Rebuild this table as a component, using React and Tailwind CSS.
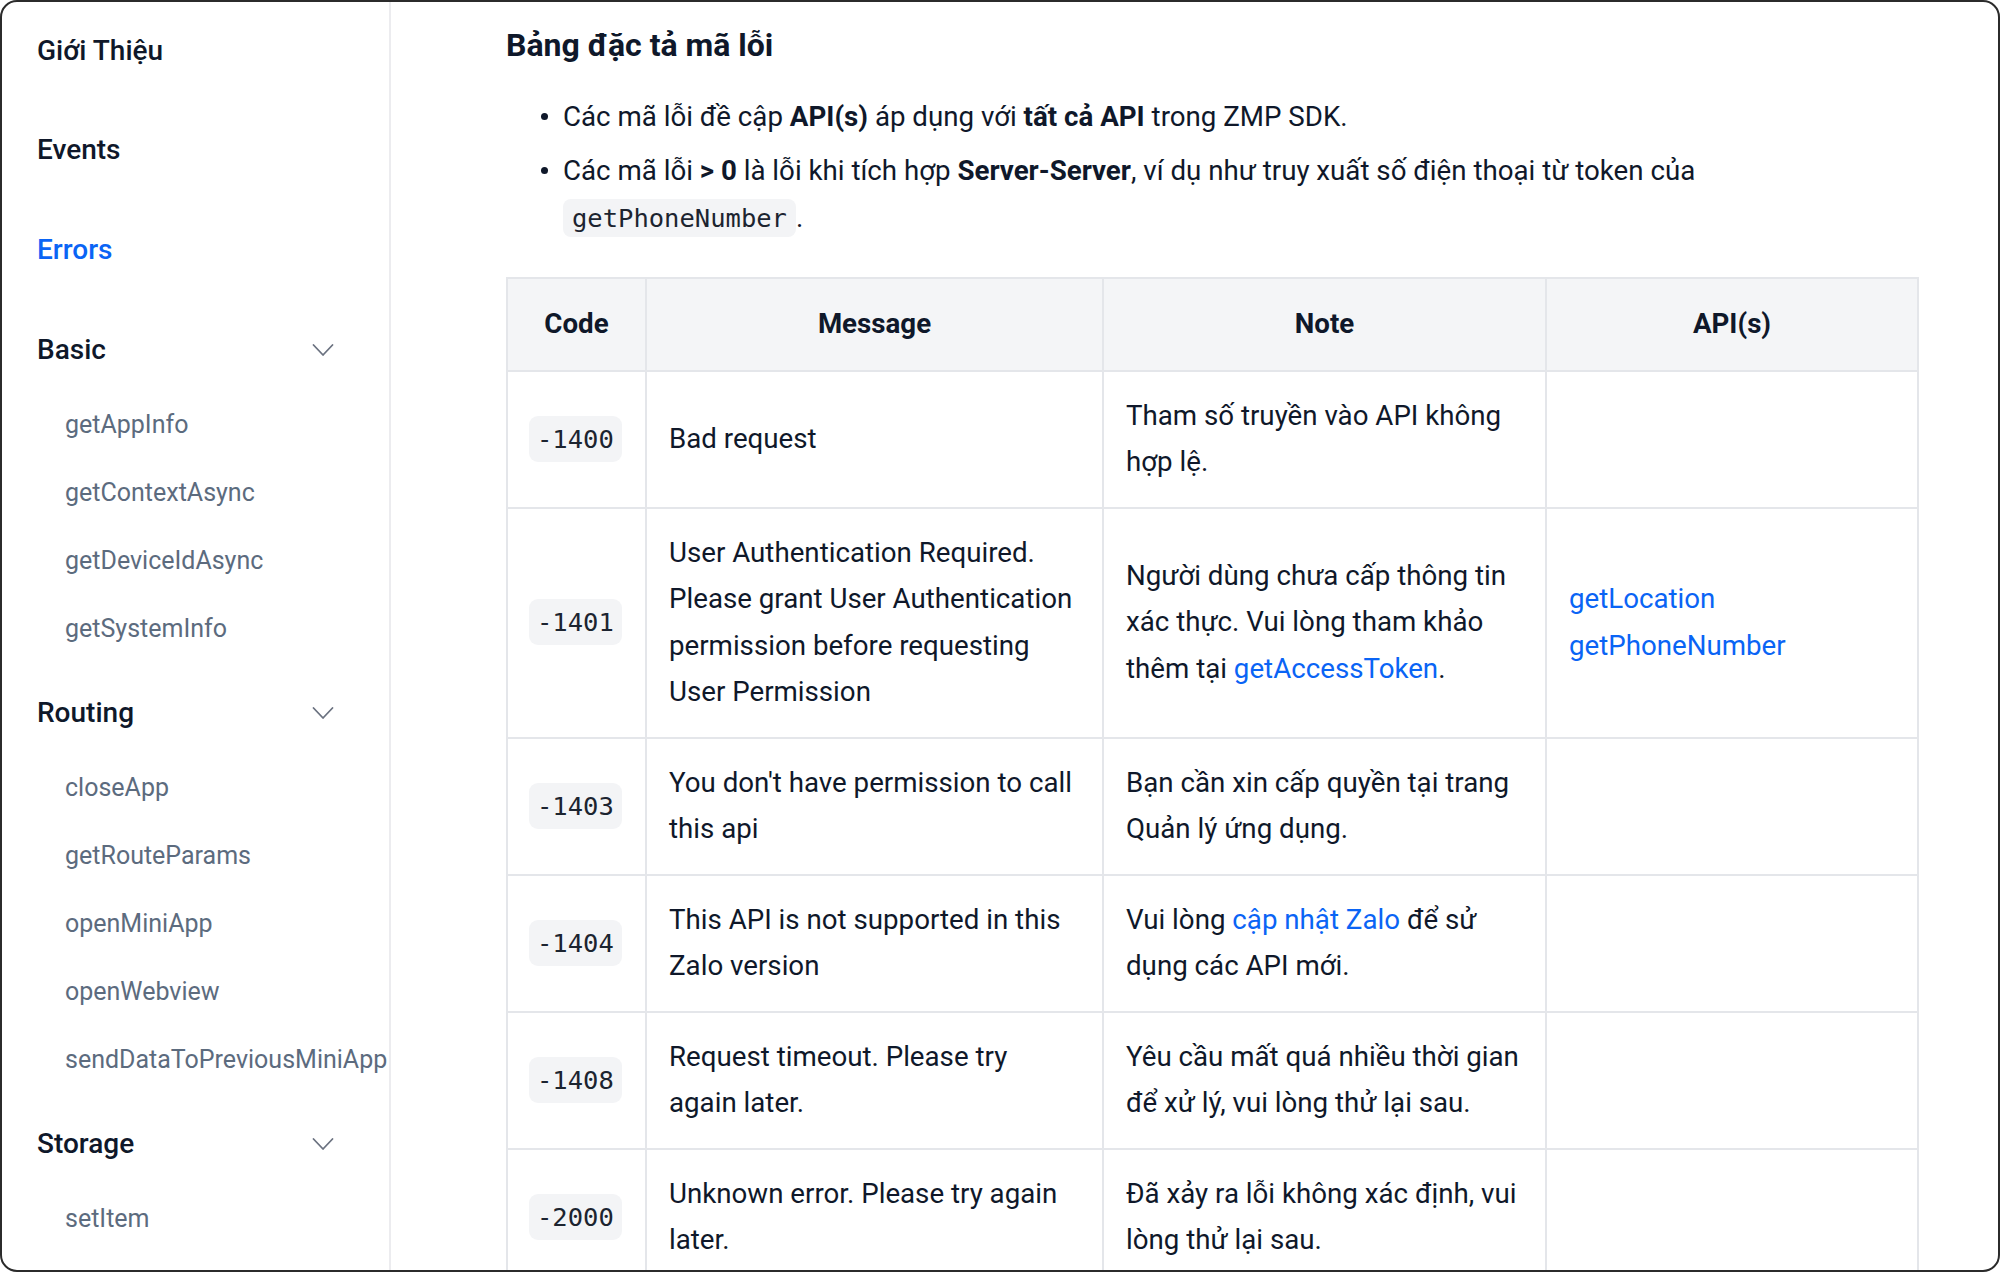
import React from 'react'

const Chevron = () => (
  <svg width="22" height="14" viewBox="0 0 22 14" fill="none" stroke="#6b7280" strokeWidth="1.8" strokeLinecap="round" strokeLinejoin="round">
    <polyline points="1.5,2 11,12 20.5,2" />
  </svg>
)

const topItems = [
  { label: 'Giới Thiệu', first: true },
  { label: 'Events' },
  { label: 'Errors', active: true },
]

const groups = [
  { title: 'Basic', items: ['getAppInfo', 'getContextAsync', 'getDeviceIdAsync', 'getSystemInfo'] },
  { title: 'Routing', items: ['closeApp', 'getRouteParams', 'openMiniApp', 'openWebview', 'sendDataToPreviousMiniApp'] },
  { title: 'Storage', items: ['setItem'] },
]

const Link = ({ children }) => <span className="text-[#0a64f5]">{children}</span>

const Code = ({ children }) => (
  <span className="inline-block rounded-[9px] bg-[#f3f4f6] px-[8px] leading-[46px] font-['DejaVu_Sans_Mono',monospace] text-[25.5px] text-[#1c2430]">
    {children}
  </span>
)

const rows = [
  {
    code: '-1400',
    message: <>Bad request</>,
    note: <>Tham số truyền vào API không<br />hợp lệ.</>,
  },
  {
    code: '-1401',
    message: <>User Authentication Required.<br />Please grant User Authentication<br />permission before requesting<br />User Permission</>,
    note: <>Người dùng chưa cấp thông tin<br />xác thực. Vui lòng tham khảo<br />thêm tại <Link>getAccessToken</Link>.</>,
    apis: ['getLocation', 'getPhoneNumber'],
  },
  {
    code: '-1403',
    message: <>You don't have permission to call<br />this api</>,
    note: <>Bạn cần xin cấp quyền tại trang<br />Quản lý ứng dụng.</>,
  },
  {
    code: '-1404',
    message: <>This API is not supported in this<br />Zalo version</>,
    note: <>Vui lòng <Link>cập nhật Zalo</Link> để sử<br />dụng các API mới.</>,
  },
  {
    code: '-1408',
    message: <>Request timeout. Please try<br />again later.</>,
    note: <>Yêu cầu mất quá nhiều thời gian<br />để xử lý, vui lòng thử lại sau.</>,
  },
  {
    code: '-2000',
    message: <>Unknown error. Please try again<br />later.</>,
    note: <>Đã xảy ra lỗi không xác định, vui<br />lòng thử lại sau.</>,
  },
]

const cell = 'border-2 border-[#e4e6ea] px-[22px] py-[21px] align-middle'

export default function App() {
  return (
    <div className="w-[2000px] h-[1272px] bg-white p-0 font-['Roboto',sans-serif] text-[#0f182a]">
      <div className="flex h-full w-full overflow-hidden rounded-[17px] border-2 border-[#2b2b2b] bg-white">
        {/* sidebar */}
        <aside className="w-[389px] shrink-0 border-r-2 border-[#ececef] pl-[35px]">
          {topItems.map((it) => (
            <div
              key={it.label}
              className={`flex items-center text-[28px] font-medium ${it.first ? 'h-[98px]' : 'h-[100px]'} ${it.active ? 'text-[#0a64f5]' : 'text-[#0f182a]'}`}
            >
              {it.label}
            </div>
          ))}
          {groups.map((g) => (
            <div key={g.title} className="mt-[9px]">
              <div className="flex h-[82px] items-center justify-between pr-[55px] text-[28px] font-medium">
                <span>{g.title}</span>
                <Chevron />
              </div>
              {g.items.map((name) => (
                <div key={name} className="flex h-[68px] items-center whitespace-nowrap pl-[28px] text-[25px] text-[#5c6b7e]">
                  {name}
                </div>
              ))}
            </div>
          ))}
        </aside>

        {/* content */}
        <main className="min-w-0 flex-1 pl-[115px] pt-[23px]">
          <h2 className="text-[32px] font-bold leading-[40px]">Bảng đặc tả mã lỗi</h2>

          <ul className="mt-[28px] text-[27.7px] leading-[47px]">
            <li className="flex">
              <span className="flex h-[47px] w-[57px] shrink-0 items-center justify-end pr-[15px]">
                <span className="h-[7px] w-[7px] rounded-full bg-[#0f182a]" />
              </span>
              <span>
                Các mã lỗi đề cập <b className="font-bold">API(s)</b> áp dụng với <b className="font-bold">tất cả API</b> trong ZMP SDK.
              </span>
            </li>
            <li className="mt-[7px] flex">
              <span className="flex h-[47px] w-[57px] shrink-0 items-center justify-end pr-[15px]">
                <span className="h-[7px] w-[7px] rounded-full bg-[#0f182a]" />
              </span>
              <span>
                Các mã lỗi <b className="font-bold">&gt; 0</b> là lỗi khi tích hợp <b className="font-bold">Server-Server</b>, ví dụ như truy xuất số điện thoại từ token của
                <br />
                <span className="inline-block rounded-[8px] bg-[#f3f4f6] px-[9px] leading-[38px] font-['DejaVu_Sans_Mono',monospace] text-[25.5px] text-[#1c2430]">getPhoneNumber</span>.
              </span>
            </li>
          </ul>

          <table className="mt-[36px] w-[1411px] table-fixed border-collapse text-[27.7px] leading-[46.5px]">
            <colgroup>
              <col className="w-[139px]" />
              <col className="w-[457px]" />
              <col className="w-[443px]" />
              <col className="w-[372px]" />
            </colgroup>
            <thead>
              <tr className="bg-[#f4f5f7]">
                {['Code', 'Message', 'Note', 'API(s)'].map((h) => (
                  <th key={h} className="border-2 border-[#e4e6ea] px-[22px] py-[22px] text-center font-bold">
                    {h}
                  </th>
                ))}
              </tr>
            </thead>
            <tbody>
              {rows.map((r) => (
                <tr key={r.code}>
                  <td className="border-2 border-[#e4e6ea] px-[21px] py-[21px] align-middle">
                    <Code>{r.code}</Code>
                  </td>
                  <td className={cell}>{r.message}</td>
                  <td className={cell}>{r.note}</td>
                  <td className={cell}>
                    {r.apis && r.apis.map((a) => (
                      <div key={a} className="text-[#0a64f5]">{a}</div>
                    ))}
                  </td>
                </tr>
              ))}
            </tbody>
          </table>
        </main>
      </div>
    </div>
  )
}
